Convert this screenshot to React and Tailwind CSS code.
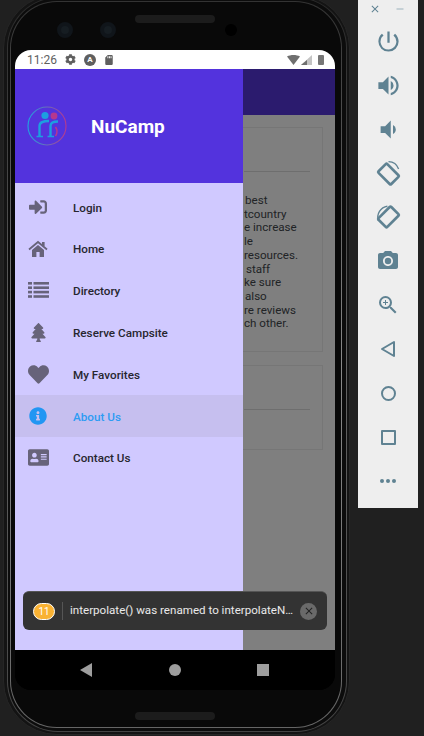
import React from 'react';
import { FaSignInAlt, FaTree, FaHeart, FaInfoCircle, FaAddressCard, FaCog, FaSdCard } from 'react-icons/fa';
import { MdPowerSettingsNew, MdVolumeUp, MdVolumeDown, MdCameraAlt, MdZoomIn, MdClose, MdRemove } from 'react-icons/md';

const HomeIcon = ({ size }) => (
  <svg width={size} height={size} viewBox="0 0 20 20" fill="currentColor">
    <path d="M1 10.5 L10 3 L19 10.5" fill="none" stroke="currentColor" strokeWidth="1.8" />
    <rect x="14" y="3" width="2.6" height="4" />
    <path d="M4 11 L10 6 L16 11 V18 H11.6 V13 H8.4 V18 H4Z" />
  </svg>
);

const ListIcon = () => (
  <svg width="21" height="16" viewBox="0 0 21 16" fill="currentColor">
    <rect x="0" y="0" width="4" height="2.6" />
    <rect x="0" y="4.4" width="4" height="2.6" />
    <rect x="0" y="8.8" width="4" height="2.6" />
    <rect x="0" y="13.2" width="4" height="2.6" />
    <rect x="5.5" y="0" width="15.5" height="2.6" />
    <rect x="5.5" y="4.4" width="15.5" height="2.6" />
    <rect x="5.5" y="8.8" width="15.5" height="2.6" />
    <rect x="5.5" y="13.2" width="15.5" height="2.6" />
  </svg>
);

const menuItems = [
  { label: 'Login', icon: FaSignInAlt, size: 18 },
  { label: 'Home', icon: HomeIcon, size: 20 },
  { label: 'Directory', icon: ListIcon, size: 20 },
  { label: 'Reserve Campsite', icon: FaTree, size: 19 },
  { label: 'My Favorites', icon: FaHeart, size: 21 },
  { label: 'About Us', icon: FaInfoCircle, size: 18, active: true },
  { label: 'Contact Us', icon: FaAddressCard, size: 21 },
];

// only the ends of the lines show past the open drawer
const missionLines = [
  { text: 'best', indent: 'pl-[1px]' },
  { text: 'tcountry', indent: 'pl-0' },
  { text: 'e increase', indent: 'pl-0' },
  { text: 'le', indent: 'pl-0' },
  { text: 'resources.', indent: 'pl-0' },
  { text: 'staff', indent: 'pl-[2px]' },
  { text: 'ke sure', indent: 'pl-0' },
  { text: 'also', indent: 'pl-[1px]' },
  { text: 're reviews', indent: 'pl-0' },
  { text: 'ch other.', indent: 'pl-0' },
];

const Logo = () => (
  <svg width="42" height="42" viewBox="0 0 42 42" fill="none">
    <defs>
      <linearGradient id="ring" x1="0" y1="0" x2="1" y2="0">
        <stop offset="0" stopColor="#1fa2e0" />
        <stop offset="1" stopColor="#b5388f" />
      </linearGradient>
    </defs>
    <circle cx="21" cy="21" r="19" stroke="url(#ring)" strokeWidth="1.1" />
    <circle cx="19" cy="10.5" r="3.6" fill="#1c9fe0" />
    <circle cx="28" cy="11" r="3.4" fill="#b5388f" />
    <path d="M13.5 31 V21 C13.5 17 17 16 23 16" stroke="#1c9fe0" strokeWidth="2.4" />
    <path d="M24.5 31 V21 C24.5 18 27 16.5 32 16.5" stroke="#1c9fe0" strokeWidth="2.4" />
    <path d="M10.5 31.5 H17 M21.5 31.5 H28" stroke="#1c9fe0" strokeWidth="1.6" />
    <path d="M29.5 22 C31.5 25 31.5 28 29.5 31" stroke="#b5388f" strokeWidth="1.6" />
  </svg>
);

const App = () => {
  return (
    <div className="w-[424px] h-[736px] overflow-hidden bg-[#202020] flex items-start font-['Roboto',sans-serif]">
      {/* phone frame */}
      <div className="shrink-0 ml-[3px] -mt-[6px] w-[347px] h-[741px] rounded-[54px] bg-[#141414] pl-[3px] pr-[2px] py-[2px] border border-[#262626]">
        <div className="w-full h-full rounded-[51px] bg-linear-to-b from-[#2a2a2a] via-[#666666] to-[#444444] p-[1px]">
          <div className="w-full h-full rounded-[50px] bg-[#0c0c0c] pl-[2px] pr-[4px] py-[3px]">
            <div className="w-full h-full rounded-[47px] bg-linear-to-b from-[#333333] via-[#8a8a8a] to-[#666666] p-[1px]">
              <div className="w-full h-full rounded-[46px] bg-[#090909] flex flex-col items-start pl-[4px] pt-[41px]">
                {/* top sensors */}
                <div className="h-[10px] w-[320px] relative shrink-0">
                  <div className="absolute left-[42px] -top-[21px] w-[16px] h-[16px] rounded-full bg-[#161d22] border-[4px] border-[#10151a]" />
                  <div className="absolute left-[85px] -top-[21px] w-[16px] h-[16px] rounded-full bg-[#161d22] border-[4px] border-[#10151a]" />
                  <div className="absolute left-[120px] -top-[28px] w-[80px] h-[8px] rounded-full bg-[#1c1c1c]" />
                  <div className="absolute left-[210px] -top-[19px] w-[12px] h-[12px] rounded-full bg-black" />
                </div>
                {/* screen */}
                <div className="w-[320px] h-[640px] shrink-0 -mt-[3px] rounded-[16px] overflow-hidden bg-black flex flex-col relative">
                  {/* status bar */}
                  <div className="h-[19px] bg-white flex items-center justify-between pl-[12px] pr-[11px] text-[#5f5f5f] shrink-0">
                    <div className="flex items-center gap-[8px]">
                      <span className="text-[12px] leading-none">11:26</span>
                      <FaCog size={11} />
                      <span className="w-[12px] h-[12px] rounded-full bg-[#5f5f5f] text-white text-[8px] leading-[12px] text-center font-bold">A</span>
                      <FaSdCard size={10} />
                    </div>
                    <div className="flex items-center gap-[1px]">
                      <svg width="13" height="10" viewBox="0 0 13 10"><path d="M0 1.5 C3.5 -0.5 9.5 -0.5 13 1.5 L6.5 10Z" fill="#6f6f6f" /></svg>
                      <svg width="11" height="10" viewBox="0 0 11 10">
                        <path d="M11 0V10H0Z" fill="#c4c4c4" />
                        <path d="M6 5V10H0Z" fill="#6f6f6f" />
                      </svg>
                      <span className="ml-[5px] w-[6px] h-[10px] rounded-[1px] bg-[#777777]" />
                    </div>
                  </div>
                  {/* app area */}
                  <div className="h-[581px] relative overflow-hidden bg-white shrink-0">
                    <div className="h-[46px] bg-[#5637dd]" />
                    <div className="pl-[228px] pr-[12px] pt-[12px] flex flex-col gap-[13px]">
                      <div className="h-[225px] -ml-[8px] pl-[8px] border border-[#ececec]">
                        <div className="h-[44px] border-b border-[#dcdcdc] mr-[12px]" />
                        <div className="mt-[22px] text-[11.6px] leading-[13.7px] text-[#43484d] whitespace-nowrap overflow-hidden">
                          {missionLines.map((line) => (
                            <div key={line.text} className={line.indent}>{line.text}</div>
                          ))}
                        </div>
                      </div>
                      <div className="h-[85px] -ml-[8px] pl-[8px] border border-[#ececec]">
                        <div className="h-[44px] border-b border-[#dcdcdc] mr-[12px]" />
                      </div>
                    </div>
                    {/* dim layer */}
                    <div className="absolute inset-0 bg-black/50" />
                    {/* drawer */}
                    <div className="absolute left-0 top-0 bottom-0 w-[228px] bg-[#d0c9ff]">
                      <div className="h-[114px] bg-[#5333dd] flex items-center pl-[11px]">
                        <Logo />
                        <span className="ml-[23px] mt-[2px] text-white text-[19px] font-bold">NuCamp</span>
                      </div>
                      <div className="pt-[3px]">
                        {menuItems.map((item) => {
                          const Icon = item.icon;
                          return (
                            <div
                              key={item.label}
                              className={`h-[41.8px] flex items-center ${item.active ? 'bg-[#c6bfef] text-[#2e9cf3]' : 'text-[#27262f]'}`}
                            >
                              <div className={`w-[44px] ml-[1px] flex justify-center ${item.active ? 'text-[#2196f3]' : 'text-[#67637a]'}`}>
                                <Icon size={item.size} />
                              </div>
                              <span className="ml-[13px] mt-[3px] text-[11.7px] font-medium">{item.label}</span>
                            </div>
                          );
                        })}
                      </div>
                    </div>
                    {/* warning toast */}
                    <div className="absolute left-[8px] top-[522px] w-[304px] h-[39px] rounded-[6px] bg-[#333] border-t border-[#555] flex items-center pl-[10px] pr-[10px]">
                      <span className="w-[22px] h-[17px] rounded-full bg-[#f9b233] border border-white text-white text-[10px] leading-[15px] text-center">11</span>
                      <span className="ml-[7px] w-px h-[18px] bg-[#555]" />
                      <span className="ml-[7px] flex-1 text-[11.6px] text-white/90 whitespace-nowrap overflow-hidden">interpolate() was renamed to interpolateN…</span>
                      <span className="w-[17px] h-[17px] rounded-full bg-[#6a6a6a] flex items-center justify-center text-[#222]">
                        <MdClose size={12} />
                      </span>
                    </div>
                  </div>
                  {/* android nav */}
                  <div className="h-[40px] bg-black flex items-center justify-between pl-[65px] pr-[66px] shrink-0">
                    <svg width="12" height="14" viewBox="0 0 12 14"><path d="M12 0V14L0 7Z" fill="#9e9e9e" /></svg>
                    <span className="w-[12px] h-[12px] rounded-full bg-[#9e9e9e]" />
                    <span className="w-[12px] h-[12px] bg-[#9e9e9e]" />
                  </div>
                </div>
                {/* bottom speaker */}
                <div className="mt-[22px] ml-[120px] w-[80px] h-[8px] rounded-full bg-[#1c1c1c]" />
              </div>
            </div>
          </div>
        </div>
      </div>

      {/* emulator toolbar */}
      <div className="ml-[8px] w-[60px] h-[508px] shrink-0 bg-[#eeeeee] flex flex-col items-center text-[#5f8292]">
        <div className="h-[16px] w-full flex items-center justify-between pl-[11px] pr-[12px] pt-[1px]">
          <MdClose size={12} />
          <MdRemove size={12} className="text-[#9db2bc]" />
        </div>
        <div className="flex flex-col items-center pt-[3px]">
          <div className="h-[44px] flex items-center justify-center"><MdPowerSettingsNew size={27} /></div>
          <div className="h-[44px] flex items-center justify-center"><MdVolumeUp size={27} /></div>
          <div className="h-[44px] flex items-center justify-center"><MdVolumeDown size={27} /></div>
          <div className="h-[44px] flex items-center justify-center">
            <svg width="27" height="27" viewBox="0 0 24 24" fill="none" stroke="currentColor">
              <rect x="6.5" y="4.5" width="11" height="16" rx="1" strokeWidth="2.4" transform="rotate(-45 12 12.5)" />
              <path d="M12 1.5 A10 10 0 0 1 21 8" strokeWidth="1.2" />
            </svg>
          </div>
          <div className="h-[44px] flex items-center justify-center">
            <svg width="27" height="27" viewBox="0 0 24 24" fill="none" stroke="currentColor">
              <rect x="6.5" y="3.5" width="11" height="16" rx="1" strokeWidth="2.4" transform="rotate(45 12 11.5)" />
              <path d="M3 15 A10 10 0 0 1 11 2" strokeWidth="1.2" />
            </svg>
          </div>
          <div className="h-[44px] flex items-center justify-center"><MdCameraAlt size={24} /></div>
          <div className="h-[44px] flex items-center justify-center"><MdZoomIn size={24} /></div>
          <div className="h-[44px] flex items-center justify-center">
            <svg width="16" height="18" viewBox="0 0 16 18" fill="none" stroke="currentColor" strokeWidth="2"><path d="M14 2V16L2 9Z" strokeLinejoin="round" /></svg>
          </div>
          <div className="h-[44px] flex items-center justify-center">
            <span className="w-[15px] h-[15px] rounded-full border-2 border-current" />
          </div>
          <div className="h-[44px] flex items-center justify-center">
            <span className="w-[15px] h-[15px] rounded-[1px] border-2 border-current" />
          </div>
          <div className="h-[44px] flex items-center justify-center gap-[2px]">
            <span className="w-[4px] h-[4px] rounded-full bg-current" />
            <span className="w-[4px] h-[4px] rounded-full bg-current" />
            <span className="w-[4px] h-[4px] rounded-full bg-current" />
          </div>
        </div>
      </div>
    </div>
  );
};

export default App;
